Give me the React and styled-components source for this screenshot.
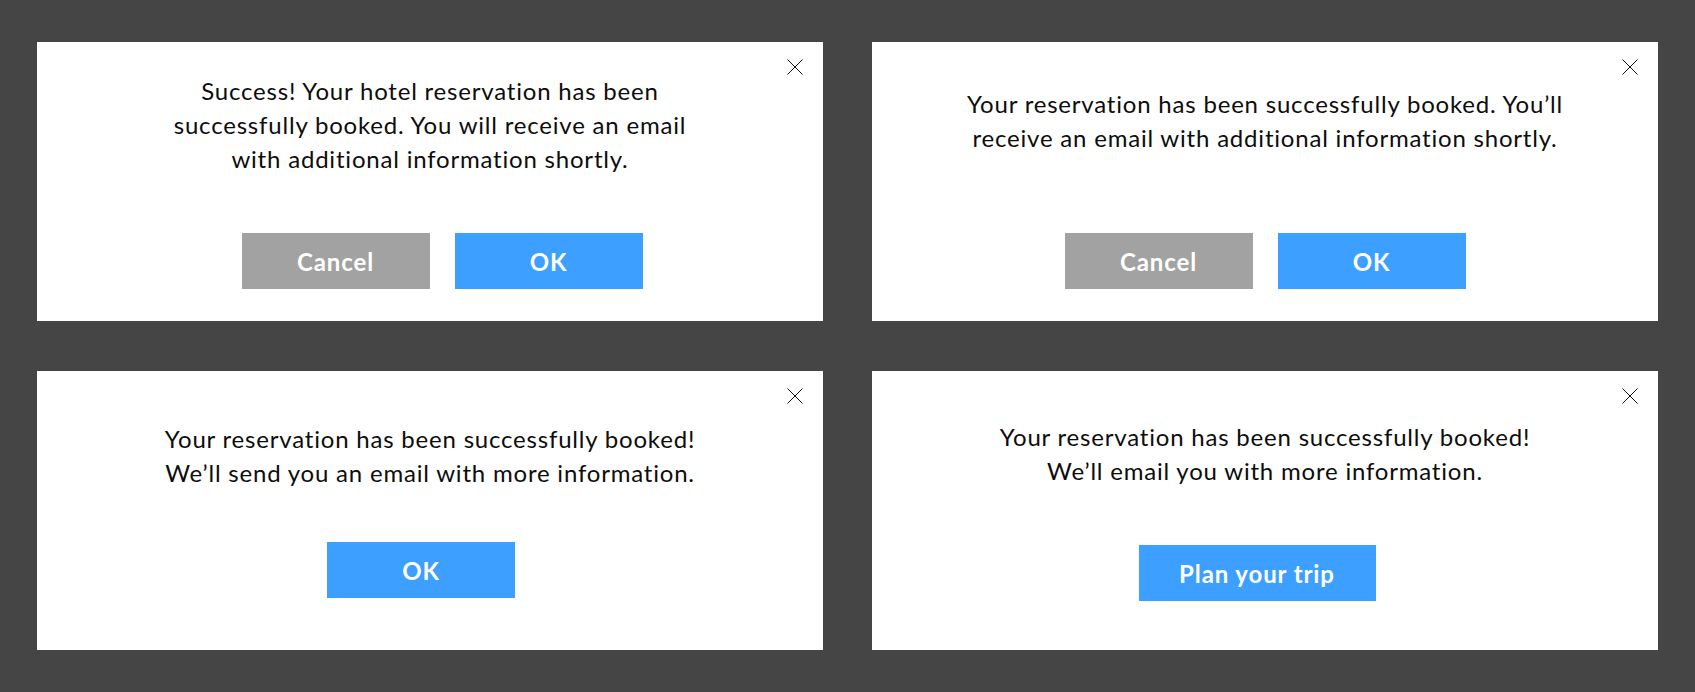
import React from 'react'
import styled, { createGlobalStyle } from 'styled-components'

const GlobalStyle = createGlobalStyle`
    html, body {
        margin: 0;
        padding: 0;
        background: #454545;
    }
    body {
        font-family: Lato, "Open Sans", sans-serif;
    }
`;

const Page = styled.div`
    display: grid;
    grid-template-columns: 1fr 1fr;
    grid-auto-rows: 279px;
    column-gap: 49px;
    row-gap: 50px;
    padding: 42px 37px;
    min-height: 692px;
    box-sizing: border-box;
    background: #454545;
`;

const Card = styled.div`
    position: relative;
    display: flex;
    flex-direction: column;
    align-items: center;
    background: #fff;
    padding-top: ${(p) => p.$top}px;
    box-sizing: border-box;
`;

const Close = styled.button`
    position: absolute;
    top: 17px;
    right: 20px;
    width: 16px;
    height: 16px;
    padding: 0;
    border: none;
    background: none;
    cursor: pointer;
    svg {
        display: block;
    }
`;

const Message = styled.p`
    margin: 0;
    font-size: 24px;
    line-height: 34px;
    letter-spacing: 0.8px;
    color: #0d0d0d;
    text-align: center;
    white-space: nowrap;
`;

const Actions = styled.div`
    display: flex;
    justify-content: center;
    gap: 25px;
    margin-top: ${(p) => p.$gap}px;
    padding-left: ${(p) => Math.max(0, p.$shift * 2)}px;
    padding-right: ${(p) => Math.max(0, -p.$shift * 2)}px;
`;

const Button = styled.button`
    height: 56px;
    width: ${(p) => (p.$wide ? 237 : 188)}px;
    padding: 0;
    border: none;
    border-radius: 0;
    font-family: Lato, "Open Sans", sans-serif;
    font-size: 24px;
    font-weight: 700;
    letter-spacing: 0.9px;
    color: #fff;
    background: ${(p) => (p.$secondary ? '#a2a2a2' : '#3d9fff')};
    cursor: pointer;
    box-sizing: border-box;
`;

const CloseIcon = () => (
    <svg width="16" height="16" viewBox="0 0 16 16">
        <path d="M0.5 0.5 L15.5 15.5 M15.5 0.5 L0.5 15.5" stroke="#111" strokeWidth="1" fill="none" />
    </svg>
);

const dialogs = [
    {
        lines: [
            'Success! Your hotel reservation has been',
            'successfully booked. You will receive an email',
            'with additional information shortly.',
        ],
        top: 32,
        gap: 57,
        shift: 12,
        buttons: [{ label: 'Cancel', secondary: true }, { label: 'OK' }],
    },
    {
        lines: [
            'Your reservation has been successfully booked. You\u2019ll',
            'receive an email with additional information shortly.',
        ],
        top: 45,
        gap: 78,
        shift: 0,
        buttons: [{ label: 'Cancel', secondary: true }, { label: 'OK' }],
    },
    {
        lines: [
            'Your reservation has been successfully booked!',
            'We\u2019ll send you an email with more information.',
        ],
        top: 51,
        gap: 52,
        shift: -9,
        buttons: [{ label: 'OK' }],
    },
    {
        lines: [
            'Your reservation has been successfully booked!',
            'We\u2019ll email you with more information.',
        ],
        top: 49,
        gap: 57,
        shift: -8,
        buttons: [{ label: 'Plan your trip', wide: true }],
    },
];

const Dialog = ({ dialog }) => (
    <Card $top={dialog.top}>
        <Close aria-label="Close"><CloseIcon /></Close>
        <Message>
            {dialog.lines.map((line, i) => (
                <React.Fragment key={i}>
                    {line}
                    {i < dialog.lines.length - 1 && <br />}
                </React.Fragment>
            ))}
        </Message>
        <Actions $gap={dialog.gap} $shift={dialog.shift}>
            {dialog.buttons.map((b) => (
                <Button key={b.label} $secondary={b.secondary} $wide={b.wide}>
                    {b.label}
                </Button>
            ))}
        </Actions>
    </Card>
);

const App = () => {
    return (
        <>
            <GlobalStyle />
            <Page>
                {dialogs.map((d, i) => (
                    <Dialog key={i} dialog={d} />
                ))}
            </Page>
        </>
    )
}

export default App
